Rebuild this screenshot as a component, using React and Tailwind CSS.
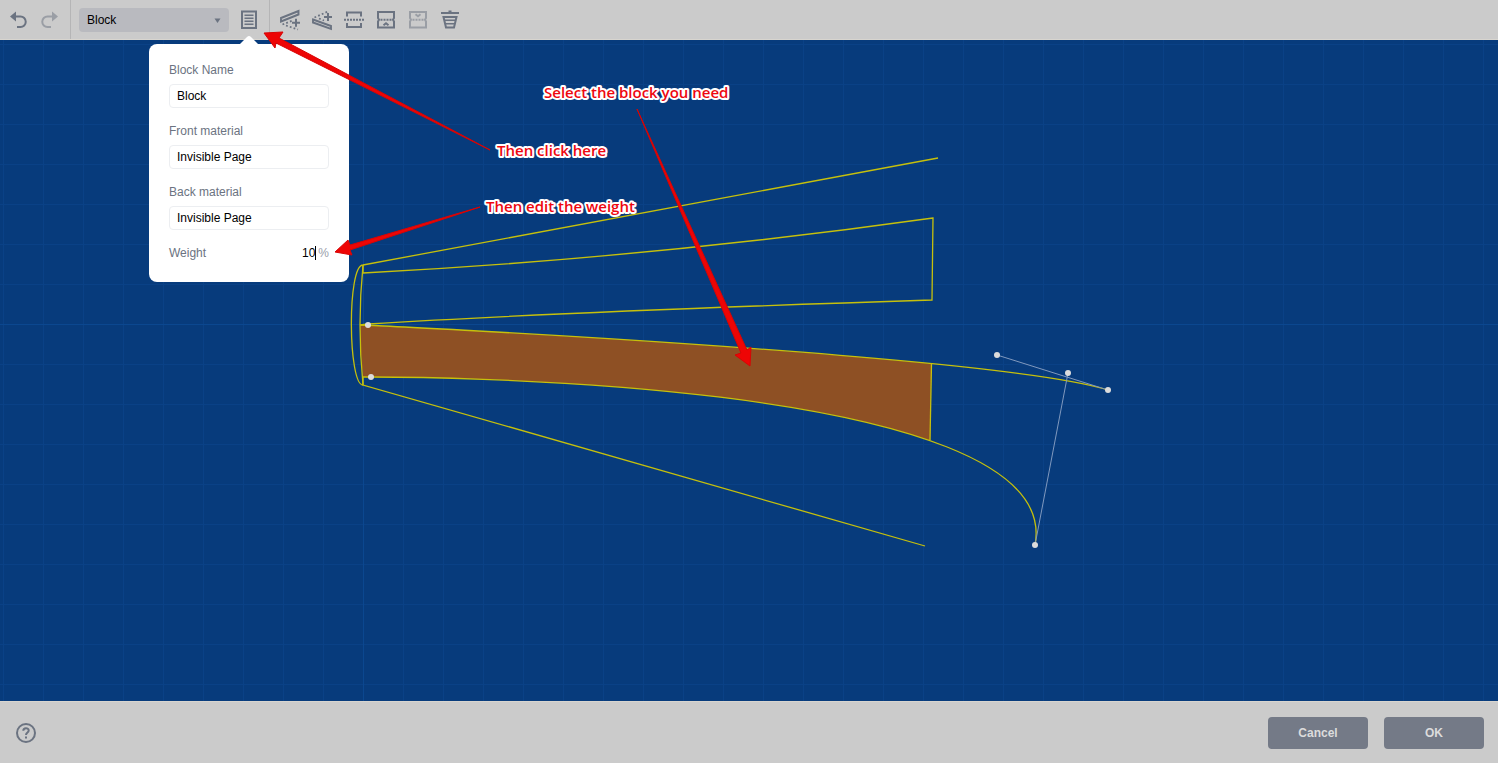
import React, { useState } from 'react';

const IconButton = ({ label, disabled, children }) => (
    <button
        type="button"
        aria-label={label}
        title={label}
        disabled={disabled}
        className={`w-8 h-8 flex items-center justify-center text-[#6b7381] ${disabled ? 'opacity-50' : ''}`}
    >
        <svg width="24" height="24" viewBox="0 0 24 24" fill="none" stroke="currentColor" strokeWidth="2">
            {children}
        </svg>
    </button>
);

const TextField = ({ id, label, value, onChange }) => (
    <div className="flex flex-col gap-1">
        <label htmlFor={id} className="text-xs leading-5 text-[#6b7381]">{label}</label>
        <input
            id={id}
            type="text"
            value={value}
            onChange={(e) => onChange(e.target.value)}
            className="w-full h-6 px-[7px] rounded border border-[#eceef1] bg-white text-xs text-black outline-none"
        />
    </div>
);

const BlockPopover = () => {
    const [name, setName] = useState('Block');
    const [front, setFront] = useState('Invisible Page');
    const [back, setBack] = useState('Invisible Page');
    const [weight, setWeight] = useState('10');

    return (
        <div className="absolute top-full left-1/2 -translate-x-1/2 z-10 w-[200px] pt-2">
            <svg className="absolute top-0 left-1/2 -translate-x-1/2" width="22" height="10" viewBox="0 0 22 10">
                <path d="M0 10 L9 1 Q11 -1 13 1 L22 10 Z" fill="#fff" />
            </svg>
            <div className="flex flex-col gap-[13px] rounded-lg bg-white px-5 pt-4 pb-[19px]">
                <TextField id="name" label="Block Name" value={name} onChange={setName} />
                <TextField id="front" label="Front material" value={front} onChange={setFront} />
                <TextField id="back" label="Back material" value={back} onChange={setBack} />
                <div className="flex items-center justify-between text-xs leading-5 text-[#6b7381]">
                    <label htmlFor="weight">Weight</label>
                    <div className="flex items-center">
                        <input
                            id="weight"
                            type="text"
                            value={weight}
                            onChange={(e) => setWeight(e.target.value)}
                            className="w-10 h-5 text-right text-black outline-none"
                        />
                        <span className="w-px h-3.5 bg-black" />
                        <span className="ml-0.5 text-[#9aa0aa]">%</span>
                    </div>
                </div>
            </div>
        </div>
    );
};

const Toolbar = () => {
    const [selected, setSelected] = useState('Block');

    return (
        <header className="h-10 shrink-0 flex items-center bg-[#cbcbcb] border-b border-[#d8d5cf]">
            <div className="flex items-center px-0.5">
                <IconButton label="Undo">
                    <path d="M7 8.500 H14.500 A5 5 0 0 1 14.500 19 H11" />
                    <path d="M4 8.500 L10 3.500 V13.500 Z" fill="currentColor" stroke="none" />
                </IconButton>
                <IconButton label="Redo" disabled>
                    <path d="M17 8.500 H9.500 A5 5 0 0 0 9.500 19 H13" />
                    <path d="M20 8.500 L14 3.500 V13.500 Z" fill="currentColor" stroke="none" />
                </IconButton>
            </div>
            <div className="h-full flex items-center gap-1 ml-0.5 pl-2 pr-1 border-x border-[#b5b5b6]">
                <div className="relative">
                    <select
                        aria-label="Selected block"
                        value={selected}
                        onChange={(e) => setSelected(e.target.value)}
                        className="block appearance-none w-[150px] h-6 pl-2 pr-6 rounded bg-[#b9babf] text-xs text-black outline-none"
                    >
                        <option>Block</option>
                    </select>
                    <svg className="absolute right-2 top-2.5 pointer-events-none" width="7" height="5" viewBox="0 0 7 5">
                        <path d="M0.500 0.500 H6.500 L3.500 5 Z" fill="#6b7381" />
                    </svg>
                </div>
                <div className="relative">
                    <IconButton label="Block properties">
                        <rect x="5" y="3.500" width="14" height="16.500" />
                        <path d="M7.500 7.200 H16.500 M7.500 10.200 H16.500 M7.500 13.200 H16.500 M7.500 16.300 H16.500" strokeWidth="1.400" />
                    </IconButton>
                    <BlockPopover />
                </div>
            </div>
            <div className="flex items-center ml-1">
                <IconButton label="Add block below">
                    <path d="M3 10 L20.500 3 V6.500 L3 13.500 Z" strokeWidth="1.900" />
                    <path d="M4.500 16.500 L14 12.800 M8 17.500 L20 21.500" strokeWidth="1.800" strokeDasharray="1.800 2.200" />
                    <path d="M14 14.800 H22 M18 10.800 V18.800" />
                </IconButton>
                <IconButton label="Add block above">
                    <path d="M3 11.500 L21 18 V21 L3 14.500 Z" strokeWidth="1.900" />
                    <path d="M4.500 9.500 L18 3.500 M9 10.500 L14 12.500" strokeWidth="1.800" strokeDasharray="1.800 2.200" />
                    <path d="M14 9 H22 M18 5 V13" />
                </IconButton>
                <IconButton label="Split block">
                    <path d="M5 8.500 V4.500 H19 V8.500 M5 15 V19 H19 V15" />
                    <path d="M2 11.800 H22" strokeDasharray="2 1" />
                </IconButton>
                <IconButton label="Merge up">
                    <path d="M4 10 V4 H20 V10 L19 11.800 L20 13.500 V19.500 H4 V13.500 L5 11.800 Z" />
                    <path d="M6.500 11.800 H18" strokeDasharray="2 1" />
                    <path d="M9.500 17.300 L12 15.300 L14.500 17.300" />
                </IconButton>
                <IconButton label="Merge down" disabled>
                    <path d="M4 10 V4 H20 V10 L19 11.800 L20 13.500 V19.500 H4 V13.500 L5 11.800 Z" />
                    <path d="M6.500 11.800 H18" strokeDasharray="2 1" />
                    <path d="M9.500 6.300 L12 8.300 L14.500 6.300" />
                </IconButton>
                <IconButton label="Delete">
                    <path d="M3 5 H21 M10.500 3.500 H13.500" />
                    <path d="M5.500 9 H18.500 L16 19.500 H8 Z" />
                    <path d="M7 12.300 H17 M8 15.800 H16" strokeWidth="1.600" />
                </IconButton>
            </div>
        </header>
    );
};

const handles = [[368, 325], [371, 377], [997, 355], [1068, 373], [1108, 390], [1035, 545]];

// Drawing coordinates are measured from the window corner, the toolbar takes the first 40 units
const Canvas = () => (
    <main className="flex-1 min-h-0 overflow-hidden bg-[#073b7c]">
        <svg className="block w-full h-full" aria-label="Block drawing">
            <defs>
                <pattern id="grid" x="3" y="4" width="40" height="40" patternUnits="userSpaceOnUse">
                    <path d="M0.500 0 V40 M0 0.500 H40" stroke="#0a4186" />
                </pattern>
                <clipPath id="blockClip">
                    <path d="M350 300 H932 L930 460 H350 Z" />
                </clipPath>
            </defs>
            <g transform="translate(0 -40)" fill="none">
                <rect x="0" y="40" width="100%" height="100%" fill="url(#grid)" />
                <path d="M363.500 40 V2000 M0 324.500 H4000" stroke="#0b478f" />
                <path
                    d="M360 325 C368 325 997 355 1108 390 L1035 545 C1068 373 371 377 363 377 Q360 350 360 325 Z"
                    fill="#8e5024"
                    clipPath="url(#blockClip)"
                />
                <g stroke="#c6c00c" strokeWidth="1.300">
                    <path d="M363 385 C348 385 347 265 363 265 L938 158" />
                    <path d="M363 265 C359 305 359 345 363 385 L925 546" />
                    <path d="M363 265 V273 Q648 258 933 218 L932 300 Q560 312 368 324 L360 325" />
                    <path d="M360 325 C368 325 997 355 1108 390" />
                    <path d="M363 385 V377 C371 377 1068 373 1035 545" />
                    <path d="M931.500 364 L930 440" />
                </g>
                <path d="M997 355 L1108 390 M1068 373 L1035 545" stroke="#8099be" />
                {handles.map(([cx, cy]) => (
                    <circle key={`${cx}-${cy}`} cx={cx} cy={cy} r="3" fill="#dcdcdc" />
                ))}
            </g>
        </svg>
    </main>
);

const notes = [
    { x: 544, y: 98, text: 'Select the block you need' },
    { x: 497, y: 156, text: 'Then click here' },
    { x: 486, y: 212, text: 'Then edit the weight' },
];

const Annotations = () => (
    <svg className="absolute inset-0 z-20 w-full h-full pointer-events-none">
        <g fill="#ee0505" stroke="#d80404" strokeWidth="1" strokeLinejoin="round">
            <path d="M490 150 L279 38 L283 32 L264 33 L275 48 L276 43 Z" />
            <path d="M480 207 L350 245 L348 240 L335 252 L352 255 L350 250 Z" />
            <path d="M637 109 L747 350 L751 347 L750 366 L735 355 L741 353 Z" />
        </g>
        {notes.map((note) => (
            <text
                key={note.text}
                x={note.x}
                y={note.y}
                fill="#ee0710"
                stroke="#fff"
                strokeWidth="4"
                strokeLinejoin="round"
                paintOrder="stroke"
                className="font-['Open_Sans',sans-serif] text-[15px] font-semibold"
            >
                {note.text}
            </text>
        ))}
    </svg>
);

const Footer = () => (
    <footer className="shrink-0 flex items-center justify-between h-[62px] px-3.5 bg-[#cbcbcb] border-t border-[#d8d5cf]">
        <button type="button" aria-label="Help" className="w-6 h-6 text-[#6b7381]">
            <svg width="24" height="24" viewBox="0 0 24 24" fill="none" stroke="currentColor" strokeWidth="2">
                <circle cx="12" cy="12" r="9" />
                <path d="M9.300 9.800 C9.300 6.500 14.700 6.500 14.700 9.500 C14.700 11.500 12 11.500 12 14 M12 15.500 V17.500" />
            </svg>
        </button>
        <div className="flex gap-4">
            <button type="button" className="w-[100px] h-8 rounded bg-[#747a87] text-xs font-bold text-[#dcdcdc]">Cancel</button>
            <button type="button" className="w-[100px] h-8 rounded bg-[#747a87] text-xs font-bold text-[#dcdcdc]">OK</button>
        </div>
    </footer>
);

const App = () => (
    <div className="relative h-screen flex flex-col overflow-hidden font-['Liberation_Sans',Arial,sans-serif]">
        <Toolbar />
        <Canvas />
        <Footer />
        <Annotations />
    </div>
);

export default App;
